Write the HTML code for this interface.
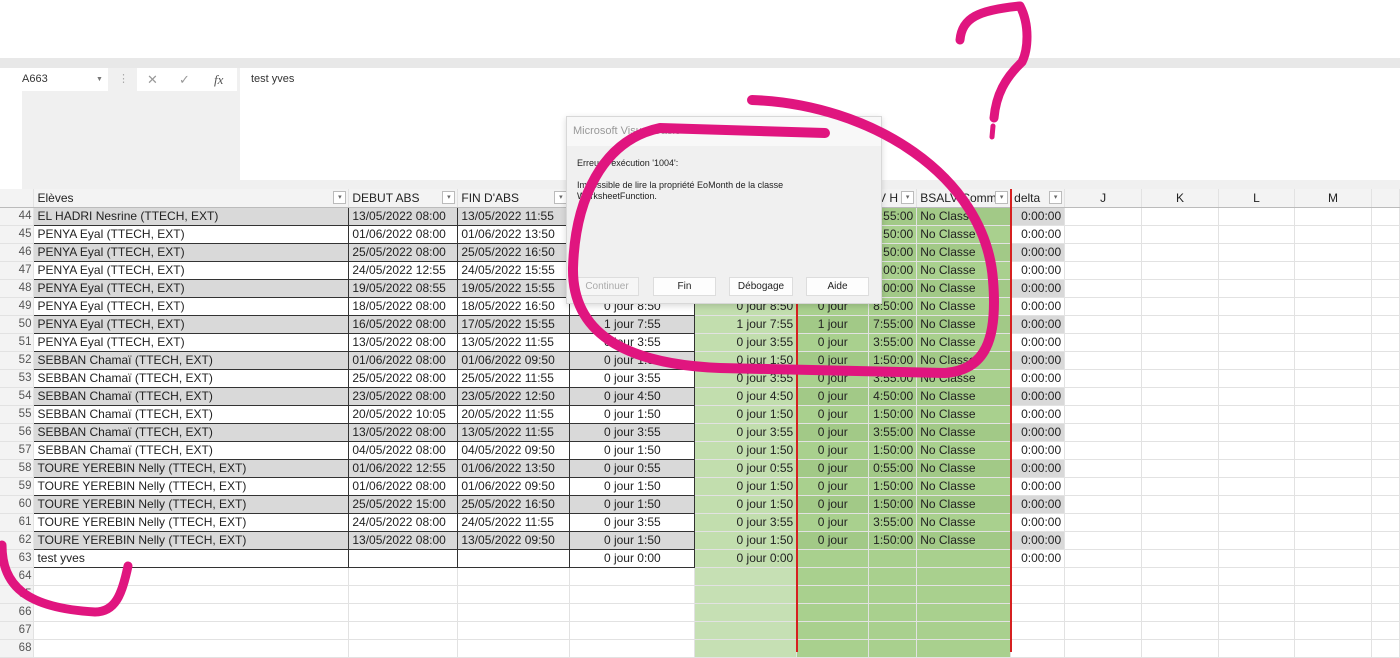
<!DOCTYPE html>
<html><head><meta charset="utf-8"><style>
*{box-sizing:border-box;margin:0;padding:0}
body{width:1400px;height:652px;overflow:hidden;background:#fff;font-family:"Liberation Sans",sans-serif;position:relative}
.abs{position:absolute}
table{position:absolute;left:0;top:189px;border-collapse:collapse;table-layout:fixed;font-size:12px;color:#222}
tr{height:18px}
td{height:18px;max-height:18px;padding:0 3px;white-space:nowrap;overflow:hidden;border-right:1px solid #e2e2e2;border-bottom:1px solid #e2e2e2;line-height:16px;position:relative}
td.r{text-align:right}td.c{text-align:center}
td.h{color:#555;text-align:right;padding:0 2px 0 0;background:#f3f3f3;font-size:11.5px}
tr.d td.a{border:1px solid #333}
tr.g td.a,tr.g td.i{background:#d9d9d9}
td.e{background:#c2deae}td.f{background:#a9d08e}
tr.g td.f{background:#a2c987}
tr.hd td{background:#f3f3f3;border-bottom:1px solid #bbb}
tr.hd td.e,tr.hd td.f{background:#f3f3f3}
.dd{position:absolute;right:2px;top:2px;width:13px;height:13px;border:1px solid #bbb;background:#fff;font-size:7px;text-align:center;line-height:11px;color:#666}
.btn{position:absolute;top:277px;height:19px;background:#fdfdfd;border:1px solid #ddd;font-size:10px;text-align:center;line-height:17px;color:#222}
</style></head><body>
<div class="abs" style="left:0;top:58px;width:1400px;height:10px;background:#e8e8e8"></div>
<div class="abs" style="left:22px;top:68px;width:1378px;height:121px;background:#f0f0f0"></div>
<div class="abs" style="left:22px;top:68px;width:86px;height:23px;background:#fff;font-size:11px;line-height:23px;color:#333">A663<span style="position:absolute;left:74px;font-size:7px;color:#777">▼</span></div>
<div class="abs" style="left:118px;top:72px;font-size:11px;color:#aaa">⋮</div>
<div class="abs" style="left:137px;top:68px;width:100px;height:23px;background:#fff;font-size:13px;line-height:23px;color:#999"><span style="position:absolute;left:10px">✕</span><span style="position:absolute;left:42px">✓</span><span style="position:absolute;left:77px;font-family:'Liberation Serif';font-style:italic;color:#555">fx</span></div>
<div class="abs" style="left:240px;top:68px;width:1160px;height:112px;background:#fff;font-size:11px;padding:5px 11px;color:#333">test yves</div>

<table>
<colgroup><col style="width:34px"><col style="width:315px"><col style="width:109px"><col style="width:112px"><col style="width:125px"><col style="width:102px"><col style="width:72px"><col style="width:48px"><col style="width:94px"><col style="width:54px"><col style="width:77px"><col style="width:77px"><col style="width:76px"><col style="width:77px"><col style="width:28px"></colgroup>
<tr class="hd"><td class="h"></td><td>Elèves<span class="dd">▾</span></td><td>DEBUT ABS<span class="dd">▾</span></td><td>FIN D'ABS<span class="dd">▾</span></td><td></td><td class="e"></td><td class="f"></td><td class="f">LV H<span class="dd">▾</span></td><td class="f">BSALV Comm<span class="dd">▾</span></td><td>delta<span class="dd">▾</span></td><td class="c">J</td><td class="c">K</td><td class="c">L</td><td class="c">M</td><td></td></tr>
<tr class="d g"><td class="h">44</td><td class="a">EL HADRI Nesrine  (TTECH, EXT)</td><td class="a">13/05/2022 08:00</td><td class="a">13/05/2022 11:55</td><td class="a c">0 jour 3:55</td><td class="e r">0 jour 3:55</td><td class="f c">0 jour</td><td class="f r">3:55:00</td><td class="f">No Classe</td><td class="i r">0:00:00</td><td></td><td></td><td></td><td></td><td></td></tr>
<tr class="d"><td class="h">45</td><td class="a">PENYA Eyal  (TTECH, EXT)</td><td class="a">01/06/2022 08:00</td><td class="a">01/06/2022 13:50</td><td class="a c">0 jour 5:50</td><td class="e r">0 jour 5:50</td><td class="f c">0 jour</td><td class="f r">5:50:00</td><td class="f">No Classe</td><td class="i r">0:00:00</td><td></td><td></td><td></td><td></td><td></td></tr>
<tr class="d g"><td class="h">46</td><td class="a">PENYA Eyal  (TTECH, EXT)</td><td class="a">25/05/2022 08:00</td><td class="a">25/05/2022 16:50</td><td class="a c">0 jour 8:50</td><td class="e r">0 jour 8:50</td><td class="f c">0 jour</td><td class="f r">8:50:00</td><td class="f">No Classe</td><td class="i r">0:00:00</td><td></td><td></td><td></td><td></td><td></td></tr>
<tr class="d"><td class="h">47</td><td class="a">PENYA Eyal  (TTECH, EXT)</td><td class="a">24/05/2022 12:55</td><td class="a">24/05/2022 15:55</td><td class="a c">0 jour 3:00</td><td class="e r">0 jour 3:00</td><td class="f c">0 jour</td><td class="f r">3:00:00</td><td class="f">No Classe</td><td class="i r">0:00:00</td><td></td><td></td><td></td><td></td><td></td></tr>
<tr class="d g"><td class="h">48</td><td class="a">PENYA Eyal  (TTECH, EXT)</td><td class="a">19/05/2022 08:55</td><td class="a">19/05/2022 15:55</td><td class="a c">0 jour 7:00</td><td class="e r">0 jour 7:00</td><td class="f c">0 jour</td><td class="f r">7:00:00</td><td class="f">No Classe</td><td class="i r">0:00:00</td><td></td><td></td><td></td><td></td><td></td></tr>
<tr class="d"><td class="h">49</td><td class="a">PENYA Eyal  (TTECH, EXT)</td><td class="a">18/05/2022 08:00</td><td class="a">18/05/2022 16:50</td><td class="a c">0 jour 8:50</td><td class="e r">0 jour 8:50</td><td class="f c">0 jour</td><td class="f r">8:50:00</td><td class="f">No Classe</td><td class="i r">0:00:00</td><td></td><td></td><td></td><td></td><td></td></tr>
<tr class="d g"><td class="h">50</td><td class="a">PENYA Eyal  (TTECH, EXT)</td><td class="a">16/05/2022 08:00</td><td class="a">17/05/2022 15:55</td><td class="a c">1 jour 7:55</td><td class="e r">1 jour 7:55</td><td class="f c">1 jour</td><td class="f r">7:55:00</td><td class="f">No Classe</td><td class="i r">0:00:00</td><td></td><td></td><td></td><td></td><td></td></tr>
<tr class="d"><td class="h">51</td><td class="a">PENYA Eyal  (TTECH, EXT)</td><td class="a">13/05/2022 08:00</td><td class="a">13/05/2022 11:55</td><td class="a c">0 jour 3:55</td><td class="e r">0 jour 3:55</td><td class="f c">0 jour</td><td class="f r">3:55:00</td><td class="f">No Classe</td><td class="i r">0:00:00</td><td></td><td></td><td></td><td></td><td></td></tr>
<tr class="d g"><td class="h">52</td><td class="a">SEBBAN Chamaï  (TTECH, EXT)</td><td class="a">01/06/2022 08:00</td><td class="a">01/06/2022 09:50</td><td class="a c">0 jour 1:50</td><td class="e r">0 jour 1:50</td><td class="f c">0 jour</td><td class="f r">1:50:00</td><td class="f">No Classe</td><td class="i r">0:00:00</td><td></td><td></td><td></td><td></td><td></td></tr>
<tr class="d"><td class="h">53</td><td class="a">SEBBAN Chamaï  (TTECH, EXT)</td><td class="a">25/05/2022 08:00</td><td class="a">25/05/2022 11:55</td><td class="a c">0 jour 3:55</td><td class="e r">0 jour 3:55</td><td class="f c">0 jour</td><td class="f r">3:55:00</td><td class="f">No Classe</td><td class="i r">0:00:00</td><td></td><td></td><td></td><td></td><td></td></tr>
<tr class="d g"><td class="h">54</td><td class="a">SEBBAN Chamaï  (TTECH, EXT)</td><td class="a">23/05/2022 08:00</td><td class="a">23/05/2022 12:50</td><td class="a c">0 jour 4:50</td><td class="e r">0 jour 4:50</td><td class="f c">0 jour</td><td class="f r">4:50:00</td><td class="f">No Classe</td><td class="i r">0:00:00</td><td></td><td></td><td></td><td></td><td></td></tr>
<tr class="d"><td class="h">55</td><td class="a">SEBBAN Chamaï  (TTECH, EXT)</td><td class="a">20/05/2022 10:05</td><td class="a">20/05/2022 11:55</td><td class="a c">0 jour 1:50</td><td class="e r">0 jour 1:50</td><td class="f c">0 jour</td><td class="f r">1:50:00</td><td class="f">No Classe</td><td class="i r">0:00:00</td><td></td><td></td><td></td><td></td><td></td></tr>
<tr class="d g"><td class="h">56</td><td class="a">SEBBAN Chamaï  (TTECH, EXT)</td><td class="a">13/05/2022 08:00</td><td class="a">13/05/2022 11:55</td><td class="a c">0 jour 3:55</td><td class="e r">0 jour 3:55</td><td class="f c">0 jour</td><td class="f r">3:55:00</td><td class="f">No Classe</td><td class="i r">0:00:00</td><td></td><td></td><td></td><td></td><td></td></tr>
<tr class="d"><td class="h">57</td><td class="a">SEBBAN Chamaï  (TTECH, EXT)</td><td class="a">04/05/2022 08:00</td><td class="a">04/05/2022 09:50</td><td class="a c">0 jour 1:50</td><td class="e r">0 jour 1:50</td><td class="f c">0 jour</td><td class="f r">1:50:00</td><td class="f">No Classe</td><td class="i r">0:00:00</td><td></td><td></td><td></td><td></td><td></td></tr>
<tr class="d g"><td class="h">58</td><td class="a">TOURE YEREBIN Nelly  (TTECH, EXT)</td><td class="a">01/06/2022 12:55</td><td class="a">01/06/2022 13:50</td><td class="a c">0 jour 0:55</td><td class="e r">0 jour 0:55</td><td class="f c">0 jour</td><td class="f r">0:55:00</td><td class="f">No Classe</td><td class="i r">0:00:00</td><td></td><td></td><td></td><td></td><td></td></tr>
<tr class="d"><td class="h">59</td><td class="a">TOURE YEREBIN Nelly  (TTECH, EXT)</td><td class="a">01/06/2022 08:00</td><td class="a">01/06/2022 09:50</td><td class="a c">0 jour 1:50</td><td class="e r">0 jour 1:50</td><td class="f c">0 jour</td><td class="f r">1:50:00</td><td class="f">No Classe</td><td class="i r">0:00:00</td><td></td><td></td><td></td><td></td><td></td></tr>
<tr class="d g"><td class="h">60</td><td class="a">TOURE YEREBIN Nelly  (TTECH, EXT)</td><td class="a">25/05/2022 15:00</td><td class="a">25/05/2022 16:50</td><td class="a c">0 jour 1:50</td><td class="e r">0 jour 1:50</td><td class="f c">0 jour</td><td class="f r">1:50:00</td><td class="f">No Classe</td><td class="i r">0:00:00</td><td></td><td></td><td></td><td></td><td></td></tr>
<tr class="d"><td class="h">61</td><td class="a">TOURE YEREBIN Nelly  (TTECH, EXT)</td><td class="a">24/05/2022 08:00</td><td class="a">24/05/2022 11:55</td><td class="a c">0 jour 3:55</td><td class="e r">0 jour 3:55</td><td class="f c">0 jour</td><td class="f r">3:55:00</td><td class="f">No Classe</td><td class="i r">0:00:00</td><td></td><td></td><td></td><td></td><td></td></tr>
<tr class="d g"><td class="h">62</td><td class="a">TOURE YEREBIN Nelly  (TTECH, EXT)</td><td class="a">13/05/2022 08:00</td><td class="a">13/05/2022 09:50</td><td class="a c">0 jour 1:50</td><td class="e r">0 jour 1:50</td><td class="f c">0 jour</td><td class="f r">1:50:00</td><td class="f">No Classe</td><td class="i r">0:00:00</td><td></td><td></td><td></td><td></td><td></td></tr>
<tr class="d"><td class="h">63</td><td class="a">test yves</td><td class="a"></td><td class="a"></td><td class="a c">0 jour 0:00</td><td class="e r">0 jour 0:00</td><td class="f"></td><td class="f"></td><td class="f"></td><td class="i r">0:00:00</td><td></td><td></td><td></td><td></td><td></td></tr>
<tr><td class="h">64</td><td></td><td></td><td></td><td></td><td class="e" style="background:#c6e0b4"></td><td class="f"></td><td class="f"></td><td class="f"></td><td></td><td></td><td></td><td></td><td></td><td></td></tr>
<tr><td class="h">65</td><td></td><td></td><td></td><td></td><td class="e" style="background:#c6e0b4"></td><td class="f"></td><td class="f"></td><td class="f"></td><td></td><td></td><td></td><td></td><td></td><td></td></tr>
<tr><td class="h">66</td><td></td><td></td><td></td><td></td><td class="e" style="background:#c6e0b4"></td><td class="f"></td><td class="f"></td><td class="f"></td><td></td><td></td><td></td><td></td><td></td><td></td></tr>
<tr><td class="h">67</td><td></td><td></td><td></td><td></td><td class="e" style="background:#c6e0b4"></td><td class="f"></td><td class="f"></td><td class="f"></td><td></td><td></td><td></td><td></td><td></td><td></td></tr>
<tr><td class="h">68</td><td></td><td></td><td></td><td></td><td class="e" style="background:#c6e0b4"></td><td class="f"></td><td class="f"></td><td class="f"></td><td></td><td></td><td></td><td></td><td></td><td></td></tr>
</table>
<div class="abs" style="left:796px;top:189px;width:2px;height:463px;background:#d62020"></div>
<div class="abs" style="left:1010px;top:189px;width:2px;height:463px;background:#d62020"></div>

<div class="abs" style="left:566px;top:116px;width:316px;height:188px;background:#f0f0f0;border:1px solid #d8d8d8;box-shadow:0 2px 6px rgba(0,0,0,.15)">
<div style="height:29px;background:#f8f8f8;font-size:11px;line-height:29px;padding-left:6px;color:#999">Microsoft Visual Basic</div>
<div style="font-size:9px;color:#222;padding:12px 0 0 10px;line-height:11px">Erreur d'exécution '1004':<br><br>Impossible de lire la propriété EoMonth de la classe<br>WorksheetFunction.</div>
</div>
<div class="btn" style="left:575px;width:64px;color:#aaa;background:#f6f6f6">Continuer</div>
<div class="btn" style="left:653px;width:63px">Fin</div>
<div class="btn" style="left:729px;width:64px">Débogage</div>
<div class="btn" style="left:806px;width:63px">Aide</div>

<svg class="abs" style="left:0;top:0" width="1400" height="652" fill="none" stroke="#e0157f" stroke-linecap="round" stroke-linejoin="round">
<path stroke-width="10" d="M752 100 C870 104 985 175 993 280 C998 340 985 370 945 373 L720 368 C620 364 572 330 573 268 C575 200 602 140 660 128 L825 133"/>
<path stroke-width="9" d="M960 40 C962 18 978 10 1020 6 C1030 25 1028 50 1022 62 C1005 78 996 95 994 118"/>
<path stroke-width="5" d="M993 126 L992 137"/>
<path stroke-width="9" d="M2 545 C2 585 25 608 95 612 C115 612 122 595 128 566"/>
</svg>
</body></html>
